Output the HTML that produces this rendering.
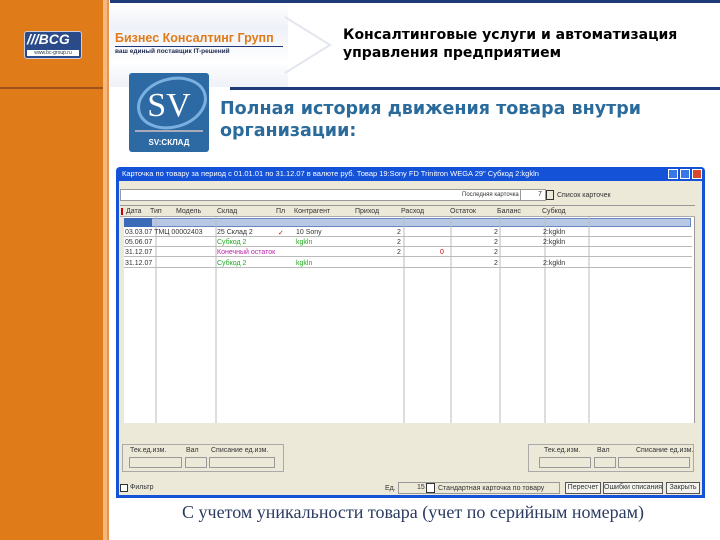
<!DOCTYPE html>
<html><head><meta charset="utf-8"><style>
*{margin:0;padding:0;box-sizing:border-box}
body{width:720px;height:540px;position:relative;overflow:hidden;background:#fff;font-family:"Liberation Sans",sans-serif}
.a{position:absolute}
.g{font-size:7px;color:#333;white-space:nowrap}
.b{position:absolute;font-size:7px;color:#333;white-space:nowrap;height:12px;border:1px solid #555;background:#f4f3ee;text-align:center;line-height:10px}
</style></head><body>
<div class="a" style="left:0;top:0;width:103px;height:540px;background:#e07b1a"></div>
<div class="a" style="left:103px;top:0;width:4px;height:540px;background:#f4b880"></div>
<div class="a" style="left:107px;top:0;width:2px;height:540px;background:#e8944a"></div>
<div class="a" style="left:0;top:87px;width:103px;height:2px;background:#a0521a"></div>
<div class="a" style="left:110px;top:0;width:610px;height:3px;background:#1f3a78"></div>
<div class="a" style="left:110px;top:3px;width:178px;height:84px;background:linear-gradient(#fff,#eef1f8 30%,#fff 70%,#eef1f8)"></div>
<div class="a" style="left:230px;top:87px;width:490px;height:3px;background:#1f3a78"></div>
<svg class="a" style="left:280px;top:15px" width="60" height="60"><polyline points="5,2 50,30 5,58" fill="none" stroke="#e3e6ee" stroke-width="2"/></svg>
<div class="a" style="left:24px;top:31px;width:58px;height:28px;background:#2a4a8a;border:1px solid #ccd;border-radius:3px"></div>
<div class="a" style="left:27px;top:31px;color:#fff;font-weight:bold;font-size:14px;font-style:italic">///BCG</div>
<div class="a" style="left:27px;top:50px;width:52px;height:6px;background:#fff;color:#234;font-size:5px;line-height:6px;text-align:center">www.bc-group.ru</div>
<div class="a" style="left:115px;top:31px;color:#e07b1a;font-weight:bold;font-size:12.5px">Бизнес Консалтинг Групп</div>
<div class="a" style="left:115px;top:46px;width:168px;height:1px;background:#1f3a78"></div>
<div class="a" style="left:115px;top:48px;color:#1f2a50;font-weight:bold;font-size:6.5px">ваш единый поставщик  IT-решений</div>
<div class="a" style="left:343px;top:26px;font-family:'DejaVu Sans',sans-serif;font-weight:bold;font-size:14px;line-height:18px;color:#000;white-space:nowrap">Консалтинговые услуги и автоматизация<br>управления предприятием</div>
<div class="a" style="left:129px;top:73px;width:80px;height:79px;background:#2d6aa3;border-radius:3px"></div>
<svg class="a" style="left:129px;top:73px" width="80" height="79"><ellipse cx="43" cy="30" rx="34" ry="24" fill="none" stroke="#7ab0e0" stroke-width="3" transform="rotate(-15 43 30)"/><text x="40" y="43" fill="#fff" font-family="Liberation Serif" font-size="34" text-anchor="middle">SV</text><rect x="6" y="57" width="68" height="2" fill="#aab"/><text x="40" y="72" fill="#fff" font-family="Liberation Sans" font-weight="bold" font-size="8" text-anchor="middle">SV:СКЛАД</text></svg>
<div class="a" style="left:220px;top:98px;font-family:'DejaVu Sans',sans-serif;font-weight:bold;font-size:17.5px;line-height:22px;color:#2a6b9c;white-space:nowrap">Полная история движения товара внутри<br>организации:</div>
<!-- window -->
<div class="a" style="left:116px;top:167px;width:589px;height:331px;background:#1452d8;border-radius:4px 4px 0 0"></div>
<div class="a" style="left:122px;top:169px;color:#fff;font-size:7.5px;white-space:nowrap">Карточка по товару за период с 01.01.01  по 31.12.07  в валюте руб.  Товар 19:Sony FD Trinitron WEGA 29"  Субкод 2:kgkln</div>
<div class="a" style="left:668px;top:169px;width:10px;height:10px;background:#3a78e8;border:1px solid #fff"></div>
<div class="a" style="left:680px;top:169px;width:10px;height:10px;background:#3a78e8;border:1px solid #fff"></div>
<div class="a" style="left:692px;top:169px;width:10px;height:10px;background:#d84a2a;border:1px solid #fff"></div>
<div class="a" style="left:119px;top:181px;width:583px;height:314px;background:#ece9d8"></div>
<div class="a" style="left:120px;top:189px;width:411px;height:12px;background:#fff;border:1px solid #999"></div>
<div class="a g" style="left:462px;top:192px;font-size:6px">Последняя карточка</div>
<div class="a" style="left:520px;top:189px;width:26px;height:12px;background:#fff;border:1px solid #999"></div>
<div class="a g" style="left:538px;top:191px">7</div>
<div class="a" style="left:546px;top:190px;width:8px;height:10px;border:1px solid #333"></div>
<div class="a g" style="left:557px;top:192px">Список карточек</div>
<div class="a" style="left:120px;top:205px;width:575px;height:227px;background:#fff;border:1px solid #999"></div>
<div class="a" style="left:120px;top:206px;width:575px;height:11px;background:#ece9d8;border-bottom:1px solid #aaa"></div>
<div class="a" style="left:121px;top:208px;width:2px;height:7px;background:#c00"></div>
<div class="a" style="left:123px;top:218px;width:568px;height:9px;background:#b6c8e4;border:1px solid #6a88c0"></div>
<div class="a" style="left:124px;top:218px;width:28px;height:9px;background:#3a6ab8"></div>
<div class="a" style="left:120px;top:217px;width:4px;height:212px;background:#ece9d8"></div>
<svg class="a" style="left:120px;top:205px" width="575" height="227">
<g stroke="#bbb" stroke-width="1">
<line x1="36" y1="12" x2="36" y2="218"/><line x1="96" y1="12" x2="96" y2="218"/><line x1="284" y1="12" x2="284" y2="218"/><line x1="331" y1="12" x2="331" y2="218"/><line x1="380" y1="12" x2="380" y2="218"/><line x1="425" y1="12" x2="425" y2="218"/><line x1="469" y1="12" x2="469" y2="218"/>
<line x1="4" y1="31.5" x2="572" y2="31.5"/><line x1="4" y1="41.5" x2="572" y2="41.5"/><line x1="4" y1="51.5" x2="572" y2="51.5"/><line x1="4" y1="62.5" x2="572" y2="62.5"/>
</g>
<rect x="0" y="218" width="575" height="9" fill="#ece9d8"/></svg>
<div class="a g" style="left:126px;top:208px">Дата</div><div class="a g" style="left:150px;top:208px">Тип</div><div class="a g" style="left:176px;top:208px">Модель</div><div class="a g" style="left:217px;top:208px">Склад</div>
<div class="a g" style="left:276px;top:208px">Пл</div><div class="a g" style="left:294px;top:208px">Контрагент</div><div class="a g" style="left:355px;top:208px">Приход</div>
<div class="a g" style="left:401px;top:208px">Расход</div><div class="a g" style="left:450px;top:208px">Остаток</div><div class="a g" style="left:497px;top:208px">Баланс</div><div class="a g" style="left:542px;top:208px">Субкод</div>
<div class="a g" style="left:125px;top:229px">03.03.07  ТМЦ    00002403</div><div class="a g" style="left:217px;top:229px">25 Склад 2</div><div class="a g" style="left:278px;top:229px;color:#c00">✓</div><div class="a g" style="left:296px;top:229px">10 Sony</div><div class="a g" style="left:397px;top:229px">2</div><div class="a g" style="left:494px;top:229px">2</div><div class="a g" style="left:543px;top:229px">2:kgkln</div>
<div class="a g" style="left:125px;top:239px">05.06.07</div><div class="a g" style="left:217px;top:239px;color:#2a2">Субкод 2</div><div class="a g" style="left:296px;top:239px;color:#2a2">kgkln</div><div class="a g" style="left:397px;top:239px">2</div><div class="a g" style="left:494px;top:239px">2</div><div class="a g" style="left:543px;top:239px">2:kgkln</div>
<div class="a g" style="left:125px;top:249px">31.12.07</div><div class="a g" style="left:217px;top:249px;color:#b2a">Конечный остаток</div><div class="a g" style="left:397px;top:249px">2</div><div class="a g" style="left:440px;top:249px;color:#c00">0</div><div class="a g" style="left:494px;top:249px">2</div>
<div class="a g" style="left:125px;top:260px">31.12.07</div><div class="a g" style="left:217px;top:260px;color:#2a2">Субкод 2</div><div class="a g" style="left:296px;top:260px;color:#2a2">kgkln</div><div class="a g" style="left:494px;top:260px">2</div><div class="a g" style="left:543px;top:260px">2:kgkln</div>
<div class="a" style="left:122px;top:444px;width:162px;height:28px;border:1px solid #aaa"></div>
<div class="a g" style="left:130px;top:447px">Тек.ед.изм.</div><div class="a g" style="left:186px;top:447px">Вал</div><div class="a g" style="left:211px;top:447px">Списание ед.изм.</div>
<div class="a" style="left:129px;top:457px;width:53px;height:11px;border:1px solid #999"></div><div class="a" style="left:185px;top:457px;width:22px;height:11px;border:1px solid #999"></div><div class="a" style="left:209px;top:457px;width:66px;height:11px;border:1px solid #999"></div>
<div class="a" style="left:528px;top:444px;width:166px;height:28px;border:1px solid #aaa"></div>
<div class="a g" style="left:544px;top:447px">Тек.ед.изм.</div><div class="a g" style="left:597px;top:447px">Вал</div><div class="a g" style="left:636px;top:447px">Списание ед.изм.</div>
<div class="a" style="left:539px;top:457px;width:52px;height:11px;border:1px solid #999"></div><div class="a" style="left:594px;top:457px;width:22px;height:11px;border:1px solid #999"></div><div class="a" style="left:618px;top:457px;width:72px;height:11px;border:1px solid #999"></div>
<div class="a" style="left:120px;top:484px;width:8px;height:8px;border:1px solid #333;background:#fff"></div>
<div class="a g" style="left:130px;top:484px">Фильтр</div>
<div class="a g" style="left:385px;top:485px">Ед.</div>
<div class="a" style="left:398px;top:482px;width:162px;height:12px;border:1px solid #999"></div>
<div class="a g" style="left:417px;top:484px">15</div>
<div class="a" style="left:426px;top:483px;width:9px;height:10px;border:1px solid #333;background:#fff"></div>
<div class="a g" style="left:438px;top:485px">Стандартная карточка по товару</div>
<div class="b" style="left:565px;top:482px;width:36px">Пересчет</div>
<div class="b" style="left:603px;top:482px;width:60px">Ошибки списания</div>
<div class="b" style="left:666px;top:482px;width:34px">Закрыть</div>
<div class="a" style="left:0;top:502px;width:720px;text-align:center;padding-left:106px;font-family:'Liberation Serif',serif;font-size:18px;color:#2a3a60">С учетом уникальности товара (учет по серийным номерам)</div>
</body></html>
